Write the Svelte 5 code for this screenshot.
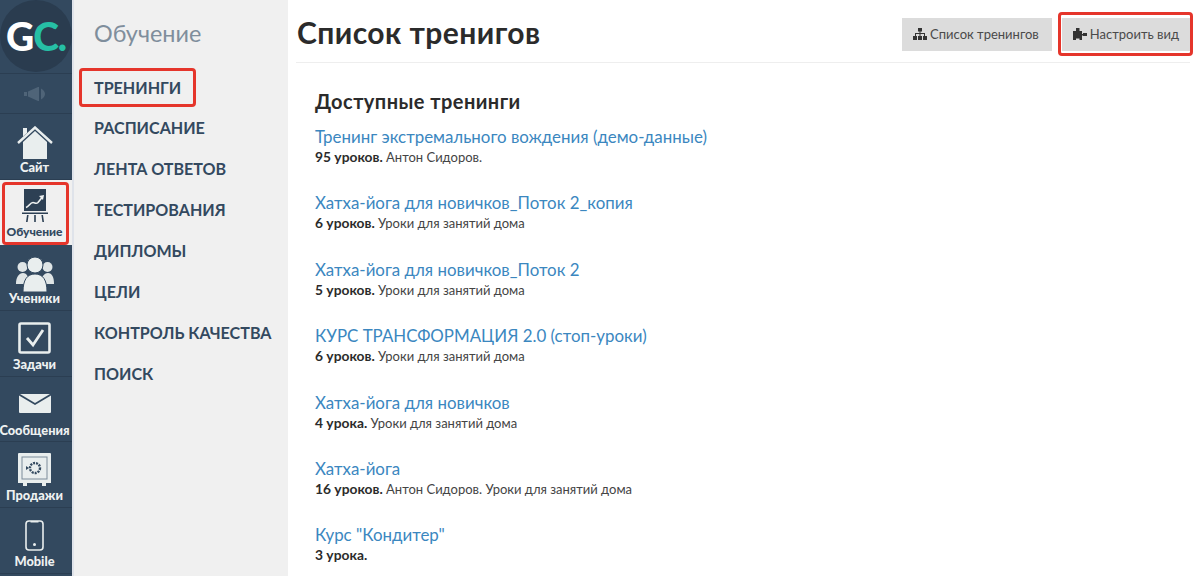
<script>
	const menu = ['Расписание', 'Лента ответов', 'Тестирования', 'Дипломы', 'Цели', 'Контроль качества', 'Поиск']

	const trainings = [
		{ title: 'Тренинг экстремального вождения (демо-данные)', count: '95 уроков.', info: 'Антон Сидоров.' },
		{ title: 'Хатха-йога для новичков_Поток 2_копия', count: '6 уроков.', info: 'Уроки для занятий дома' },
		{ title: 'Хатха-йога для новичков_Поток 2', count: '5 уроков.', info: 'Уроки для занятий дома' },
		{ title: 'КУРС ТРАНСФОРМАЦИЯ 2.0 (стоп-уроки)', count: '6 уроков.', info: 'Уроки для занятий дома' },
		{ title: 'Хатха-йога для новичков', count: '4 урока.', info: 'Уроки для занятий дома' },
		{ title: 'Хатха-йога', count: '16 уроков.', info: 'Антон Сидоров. Уроки для занятий дома' },
		{ title: 'Курс "Кондитер"', count: '3 урока.', info: '' }
	]
</script>

<div class="page">
	<nav class="rail">
		<div class="logo-row">
			<div class="logo"><span class="g">G</span><span class="c">C.</span></div>
		</div>
		<div class="sound">
			<svg width="22" height="14" viewBox="0 0 22 14"><path d="M0 5h3v4H0zM4 4.500 14 0h1v14h-1L4 9.500zM17 1.500c2 1 4 3 4 5.500s-2 4.500-4 5.500z" fill="#4f6478" /></svg>
		</div>
		<a class="item home">
			<span class="icon">
				<svg width="36" height="33" viewBox="0 0 36 33">
					<path d="M6 16 18 5l12 11v17H6z" fill="#e9eeee" />
					<path d="M1 17 18 1.500 35 17" fill="none" stroke="#e9eeee" stroke-width="2.400" />
					<path d="M6 2h4v5L6 10.500z" fill="#e9eeee" />
				</svg>
			</span>
			<span>Сайт</span>
		</a>
		<a class="item active">
			<span class="icon">
				<svg width="26" height="33" viewBox="0 0 26 33">
					<path d="M2 0h22v22H2z" fill="#2d4054" />
					<path d="M4 18.500c3-1 4-5 7-5 2 0 3 2 5 0l4-5" fill="none" stroke="#eef1f1" stroke-width="1.600" />
					<path d="m17 7 5-1-1 5z" fill="#eef1f1" />
					<path d="M0 23.500h26V25H0zM5 26h1.600l-1 7H4zM12.200 26h1.600v7h-1.600zM19.400 26H21l1 7h-1.600z" fill="#2d4054" />
				</svg>
			</span>
			<span>Обучение</span>
		</a>
		<a class="item people">
			<span class="icon">
				<svg width="38" height="35" viewBox="0 0 38 35">
					<circle cx="6.500" cy="10" r="5" fill="#dfe5e6" />
					<circle cx="31.500" cy="10" r="5" fill="#dfe5e6" />
					<path d="M0 27c0-7 3-11 7-11s6 4 6 11zM25 27c0-7 3-11 7-11s6 4 6 11z" fill="#dfe5e6" />
					<circle cx="19" cy="8" r="8" fill="#e9eeee" stroke="#33495f" />
					<path d="M7 35c0-12 4-18 12-18s12 6 12 18z" fill="#e9eeee" stroke="#33495f" />
				</svg>
			</span>
			<span>Ученики</span>
		</a>
		<a class="item">
			<span class="icon">
				<svg width="33" height="32" viewBox="0 0 33 32">
					<rect x="1.500" y="1.500" width="30" height="29" rx="1.500" fill="none" stroke="#e9eeee" stroke-width="2.600" />
					<path d="m9 16 6 7L25 8" fill="none" stroke="#e9eeee" stroke-width="2.800" />
				</svg>
			</span>
			<span>Задачи</span>
		</a>
		<a class="item">
			<span class="icon">
				<svg width="32" height="19" viewBox="0 0 32 19">
					<path d="M0 1.500V18a1 1 0 0 0 1 1h30a1 1 0 0 0 1-1V1.500L16 11z" fill="#e9eeee" />
					<path d="M1 0h30L16 9z" fill="#e9eeee" />
				</svg>
			</span>
			<span>Сообщения</span>
		</a>
		<a class="item">
			<span class="icon">
				<svg width="33" height="33" viewBox="0 0 33 33">
					<path d="M1 0h31a1 1 0 0 1 1 1v29h-5v3h-4v-3H9v3H5v-3H0V1a1 1 0 0 1 1-1z" fill="#e9eeee" />
					<rect x="4" y="4" width="25" height="22" fill="none" stroke="#7d8c9a" stroke-width="1" />
					<circle cx="17" cy="15" r="5" fill="none" stroke="#33495f" stroke-width="2.400" stroke-dasharray="2 1" />
					<path d="m8 13 3 2-3 2z" fill="#33495f" />
				</svg>
			</span>
			<span>Продажи</span>
		</a>
		<a class="item">
			<span class="icon">
				<svg width="19" height="31" viewBox="0 0 19 31">
					<rect x="1" y="1" width="17" height="29" rx="3" fill="none" stroke="#e9eeee" stroke-width="1.600" />
					<path d="M5.500 1h8v1.500h-8z" fill="#e9eeee" />
					<circle cx="9.500" cy="24.500" r="1.500" fill="#e9eeee" />
				</svg>
			</span>
			<span>Mobile</span>
		</a>
	</nav>

	<aside class="side">
		<h2>Обучение</h2>
		<ul>
			<li class="marked"><a>Тренинги</a></li>
			{#each menu as label}
				<li><a>{label}</a></li>
			{/each}
		</ul>
	</aside>

	<main>
		<header>
			<h1>Список тренигов</h1>
			<div class="actions">
				<button>
					<svg width="14" height="12" viewBox="0 0 14 12"><path d="M5 0h4v3.500H7.500V5H12v3h2v4h-4V8h1V6H7.500v2H9v4H5V8h1.500V6H3v2h1v4H0V8h2V5h4.500V3.500H5z" fill="#333" /></svg>
					Список тренингов
				</button>
				<button class="marked">
					<svg width="14" height="12" viewBox="0 0 14 12"><path d="M3 3V0h3.500v3H9v3h1V5h4v3h-4V7.500H9V12H6.500v-1.500H3V12H0V3z" fill="#333" /></svg>
					Настроить вид
				</button>
			</div>
		</header>

		<section>
			<h3>Доступные тренинги</h3>
			{#each trainings as t}
				<div class="training">
					<a class="title">{t.title}</a>
					<p><b>{t.count}</b> {t.info}</p>
				</div>
			{/each}
		</section>
	</main>
</div>

<style>
	:global(body) {
		overflow: hidden;
		font-family: 'Lato', 'Open Sans', sans-serif;
	}

	.page {
		display: flex;
		height: 576px;
		overflow: hidden;
		background: #fff;
	}

	.rail {
		width: 72px;
		flex: none;
		display: flex;
		flex-direction: column;
		background: #33495f;
		border-right: 2px solid #dfe3ea;
		box-sizing: content-box;
	}

	.logo-row {
		height: 74px;
		border-bottom: 1px solid #2b3e52;
		overflow: hidden;
		box-sizing: border-box;
	}

	.logo {
		width: 72px;
		height: 72px;
		border-radius: 50%;
		background: #2a3c4f;
		display: flex;
		align-items: center;
		justify-content: center;
		font-size: 39px;
		font-weight: 900;
		letter-spacing: -1px;
	}

	.g {
		color: #fff;
	}

	.c {
		color: #26bfa5;
	}

	.sound {
		height: 40px;
		padding-right: 3px;
		display: flex;
		align-items: center;
		justify-content: center;
		border-bottom: 1px solid #2b3e52;
		box-sizing: border-box;
	}

	.item {
		position: relative;
		height: 65.700px;
		padding: 9px 3px 0 0;
		display: flex;
		flex-direction: column;
		align-items: center;
		border-bottom: 1px solid #2b3e52;
		box-sizing: border-box;
		color: #eef1f1;
		font-size: 12.800px;
		line-height: 14px;
		font-weight: 900;
		white-space: nowrap;
	}

	.icon {
		height: 36px;
		margin-bottom: 1px;
		display: flex;
		align-items: center;
		box-sizing: border-box;
	}

	.home .icon {
		padding-top: 2px;
	}

	.people .icon {
		padding-top: 4px;
	}

	.item.active {
		padding-top: 8px;
		background: #f0f0f0;
		color: #33495f;
		font-size: 12px;
		border-bottom: 0;
	}

	.item.active::after {
		content: '';
		position: absolute;
		inset: 2px 3px 0 2px;
		border: 3px solid #e5352b;
		border-radius: 4px;
	}

	.side {
		width: 214px;
		flex: none;
		background: #f0f0f0;
		box-sizing: border-box;
		padding-top: 18px;
	}

	.side h2 {
		margin: 0 0 20px 20px;
		font-size: 23.400px;
		line-height: 30px;
		font-weight: 400;
		color: #7f8e9c;
	}

	.side ul {
		list-style: none;
		margin: 0;
		padding: 0;
	}

	.side li {
		height: 41px;
		display: flex;
		align-items: center;
		padding-left: 20px;
		font-size: 16.100px;
		font-weight: 700;
		text-transform: uppercase;
		color: #33495f;
		box-sizing: border-box;
	}

	.side li.marked {
		width: 117px;
		height: 39px;
		margin-left: 5px;
		padding-left: 12px;
		border: 3px solid #e5352b;
		border-radius: 4px;
	}

	main {
		flex: 1;
		min-width: 0;
		padding: 0 10px 0 8px;
	}

	header {
		height: 63px;
		padding-top: 7px;
		display: flex;
		align-items: center;
		justify-content: space-between;
		border-bottom: 1px solid #eeeeee;
		box-sizing: border-box;
	}

	h1 {
		margin: 0 0 6px 1px;
		font-size: 30px;
		letter-spacing: 0.450px;
		font-weight: 700;
		color: #2b2b2b;
	}

	.actions {
		display: flex;
		align-items: center;
		gap: 10px;
	}

	button {
		position: relative;
		height: 33px;
		padding: 0 13px 2px 11px;
		border: 0;
		background: #dcdcdc;
		color: #4a4a4a;
		font-family: inherit;
		font-size: 13px;
		display: flex;
		align-items: center;
		gap: 3px;
	}

	button.marked {
		padding: 0 11px 2px;
	}

	button.marked::after {
		content: '';
		position: absolute;
		inset: -6px -3px -5px -4px;
		border: 3px solid #e5352b;
		border-radius: 4px;
	}

	section {
		padding: 26px 0 0 19px;
	}

	h3 {
		margin: 0 0 12px;
		font-size: 20px;
		letter-spacing: 0.450px;
		line-height: 24px;
		font-weight: 700;
		color: #2b2b2b;
	}

	.training {
		height: 66.400px;
	}

	.title {
		display: block;
		font-size: 16.900px;
		line-height: 23px;
		color: #3b87bf;
	}

	p {
		margin: 0;
		font-size: 13px;
		line-height: 18px;
		color: #444;
	}

	p b {
		font-size: 13.800px;
		color: #2b2b2b;
	}
</style>
